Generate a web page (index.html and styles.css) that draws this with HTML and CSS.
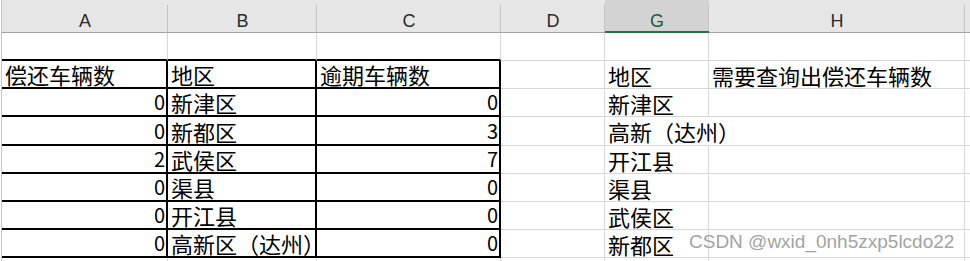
FILE: index.html
```html
<!DOCTYPE html>
<html lang="zh-CN">
<head>
    <meta charset="UTF-8">
    <meta name="viewport" content="width=device-width, initial-scale=1.0">
    <title>偿还车辆数</title>
    <link rel="stylesheet" href="styles.css">
</head>
<body>
    <div class="sheet-wrap">
        <div class="sheet">
            <!-- column headers -->
            <div class="hd">A</div>
            <div class="hd">B</div>
            <div class="hd">C</div>
            <div class="hd">D</div>
            <div class="hd hd-sel">G</div>
            <div class="hd">H</div>
            <div class="hd"></div>

            <!-- row 1 -->
            <div class="cell edge-bottom"></div>
            <div class="cell edge-bottom"></div>
            <div class="cell edge-bottom"></div>
            <div class="cell"></div>
            <div class="cell"></div>
            <div class="cell"></div>
            <div class="cell"></div>

            <!-- row 2 -->
            <div class="cell boxed">偿还车辆数</div>
            <div class="cell boxed">地区</div>
            <div class="cell boxed">逾期车辆数</div>
            <div class="cell"></div>
            <div class="cell">地区</div>
            <div class="cell">需要查询出偿还车辆数</div>
            <div class="cell"></div>

            <!-- row 3 -->
            <div class="cell boxed num">0</div>
            <div class="cell boxed">新津区</div>
            <div class="cell boxed num">0</div>
            <div class="cell"></div>
            <div class="cell">新津区</div>
            <div class="cell"></div>
            <div class="cell"></div>

            <!-- row 4 -->
            <div class="cell boxed num">0</div>
            <div class="cell boxed">新都区</div>
            <div class="cell boxed num">3</div>
            <div class="cell"></div>
            <div class="cell spill">高新（达州）</div>
            <div class="cell"></div>
            <div class="cell"></div>

            <!-- row 5 -->
            <div class="cell boxed num">2</div>
            <div class="cell boxed">武侯区</div>
            <div class="cell boxed num">7</div>
            <div class="cell"></div>
            <div class="cell">开江县</div>
            <div class="cell"></div>
            <div class="cell"></div>

            <!-- row 6 -->
            <div class="cell boxed num">0</div>
            <div class="cell boxed">渠县</div>
            <div class="cell boxed num">0</div>
            <div class="cell"></div>
            <div class="cell">渠县</div>
            <div class="cell"></div>
            <div class="cell"></div>

            <!-- row 7 -->
            <div class="cell boxed num">0</div>
            <div class="cell boxed">开江县</div>
            <div class="cell boxed num">0</div>
            <div class="cell"></div>
            <div class="cell">武侯区</div>
            <div class="cell"></div>
            <div class="cell"></div>

            <!-- row 8 -->
            <div class="cell boxed num">0</div>
            <div class="cell boxed">高新区（达州）</div>
            <div class="cell boxed num">0</div>
            <div class="cell"></div>
            <div class="cell">新都区</div>
            <div class="cell"></div>
            <div class="cell"></div>

            <!-- row 9 -->
            <div class="cell"></div>
            <div class="cell"></div>
            <div class="cell"></div>
            <div class="cell"></div>
            <div class="cell"></div>
            <div class="cell"></div>
            <div class="cell"></div>
        </div>
        <div class="watermark">CSDN @wxid_0nh5zxp5lcdo22</div>
    </div>
</body>
</html>
```

FILE: styles.css
```css
/* spreadsheet grid */
body {
    margin: 0;
    background: #fff;
    overflow: hidden;
}
.sheet-wrap {
    position: relative;
    height: 261px;
    overflow: hidden;
}
.sheet {
    display: grid;
    grid-template-columns: 166px 149px 184px 104px 104px 256px 20px;
    grid-template-rows: 33px 28px 28px 28px 29px 28px 28px 28px 28px 28px;
    margin-left: 1px;
    border-left: 1px solid #c4c4c4;
    font-family: "Noto Sans CJK SC", "Noto Sans", sans-serif;
    font-size: 22px;
    color: #000;
}
.sheet > div {
    box-sizing: border-box;
    white-space: nowrap;
}

/* header row */
.hd {
    background: #e6e6e6 linear-gradient(#c4c4c4, #c4c4c4) right bottom / 1px 27px no-repeat;
    border-bottom: 1px solid #a3a3a3;
    font-family: "Liberation Sans", Arial, sans-serif;
    font-size: 18px;
    line-height: 22px;
    padding-top: 10px;
    text-align: center;
    color: #2b2b2b;
}
.hd-sel {
    background-color: #d3d3d3;
    border-bottom: 2px solid #217346;
    color: #1d5a38;
}

/* body cells */
.cell {
    display: flex;
    align-items: center;
    line-height: 26px;
    padding: 0 3px;
    border-right: 1px solid #d6d6d6;
    border-bottom: 1px solid #d6d6d6;
}
.cell.edge-bottom {
    border-bottom: 2px solid #000;
}
.cell.boxed {
    border-right: 2px solid #000;
    border-bottom: 2px solid #000;
}
.cell.num {
    justify-content: flex-end;
    padding-right: 1px;
    font-size: 20px;
}
.cell.spill {
    overflow: visible;
    border-right-color: transparent;
}

.watermark {
    position: absolute;
    left: 689px;
    top: 232px;
    font-family: "Liberation Sans", Arial, sans-serif;
    font-size: 19px;
    line-height: 19px;
    color: #a3a3a3;
    white-space: nowrap;
}
```
